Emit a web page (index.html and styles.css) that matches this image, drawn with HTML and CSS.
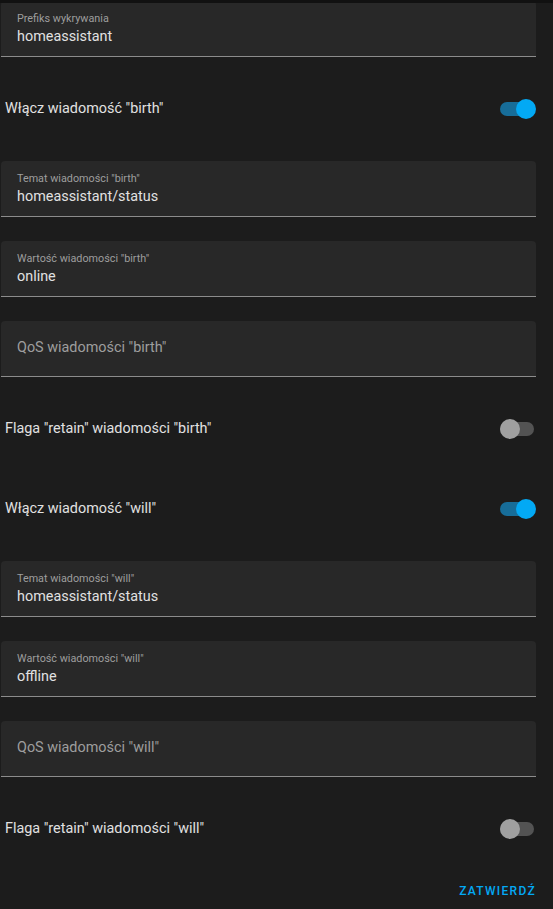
FILE: index.html
```html
<!DOCTYPE html>
<html>

<head>
    <link rel="stylesheet" href="styles.css">
</head>

<body>
    <div class="topbar"></div>
    <div class="scroll">
        <div class="content">
            <!-- Discovery -->
            <div class="field">
                <span class="field-label">Prefiks wykrywania</span>
                <span class="field-value">homeassistant</span>
            </div>

            <!-- Birth message -->
            <div class="switch-row">
                <span>Włącz wiadomość "birth"</span>
                <div class="switch on"><div class="knob"></div></div>
            </div>
            <div class="field">
                <span class="field-label">Temat wiadomości "birth"</span>
                <span class="field-value">homeassistant/status</span>
            </div>
            <div class="field">
                <span class="field-label">Wartość wiadomości "birth"</span>
                <span class="field-value">online</span>
            </div>
            <div class="field empty">
                <span class="field-placeholder">QoS wiadomości "birth"</span>
            </div>
            <div class="switch-row">
                <span>Flaga "retain" wiadomości "birth"</span>
                <div class="switch"><div class="knob"></div></div>
            </div>

            <!-- Will message -->
            <div class="switch-row">
                <span>Włącz wiadomość "will"</span>
                <div class="switch on"><div class="knob"></div></div>
            </div>
            <div class="field">
                <span class="field-label">Temat wiadomości "will"</span>
                <span class="field-value">homeassistant/status</span>
            </div>
            <div class="field">
                <span class="field-label">Wartość wiadomości "will"</span>
                <span class="field-value">offline</span>
            </div>
            <div class="field empty">
                <span class="field-placeholder">QoS wiadomości "will"</span>
            </div>
            <div class="switch-row">
                <span>Flaga "retain" wiadomości "will"</span>
                <div class="switch"><div class="knob"></div></div>
            </div>

            <div class="actions">
                <button class="submit">Zatwierdź</button>
            </div>
        </div>
    </div>
</body>

</html>
```

FILE: styles.css
```css
body {
    font-family: Roboto, sans-serif;
    margin: 0;
    background-color: #1c1c1c;
    color: #e1e1e1;
    height: 909px;
    overflow: hidden;
}

.topbar {
    height: 3px;
    background: #111111;
    position: relative;
    z-index: 1;
}

.scroll {
    height: 906px;
    overflow: hidden;
}

.content {
    margin-top: -2px;
    padding: 0 17px 0 1px;
    display: flex;
    flex-direction: column;
    gap: 24px;
}

.field {
    height: 55px;
    background: #282828;
    border-bottom: 1px solid #8c8c8c;
    border-radius: 4px 4px 0 0;
    padding: 0 16px;
    display: flex;
    flex-direction: column;
    box-sizing: content-box;
}

.field-label {
    font-size: 10.8px;
    color: #9e9e9e;
    margin-top: 11px;
    line-height: 13px;
}

.field-value {
    font-size: 14.4px;
    color: #e1e1e1;
    line-height: 18px;
    margin-top: 3px;
}

.field.empty {
    justify-content: center;
}

.field-placeholder {
    font-size: 14.4px;
    color: #9e9e9e;
    margin-bottom: 3px;
}

.switch-row {
    height: 56px;
    display: flex;
    justify-content: space-between;
    align-items: center;
    padding-left: 4px;
    font-size: 14.4px;
    color: #e1e1e1;
}

.switch-row span {
    margin-bottom: 2px;
}

.switch {
    width: 34px;
    height: 14px;
    border-radius: 7px;
    background: #535353;
    display: flex;
    align-items: center;
    margin-right: 2px;
}

.switch .knob {
    width: 20px;
    height: 20px;
    border-radius: 50%;
    background: #a0a0a0;
}

.switch.on {
    background: #176d99;
    justify-content: flex-end;
}

.switch.on .knob {
    background: #03a9f4;
    margin-right: -2px;
}

.actions {
    display: flex;
    justify-content: flex-end;
    margin-top: -8px;
}

.submit {
    font-family: Roboto, sans-serif;
    font-size: 12px;
    font-weight: 500;
    letter-spacing: 1.3px;
    text-transform: uppercase;
    color: #03a9f4;
    background: none;
    border: none;
    height: 36px;
    padding: 0;
    margin-right: 0;
}
```
